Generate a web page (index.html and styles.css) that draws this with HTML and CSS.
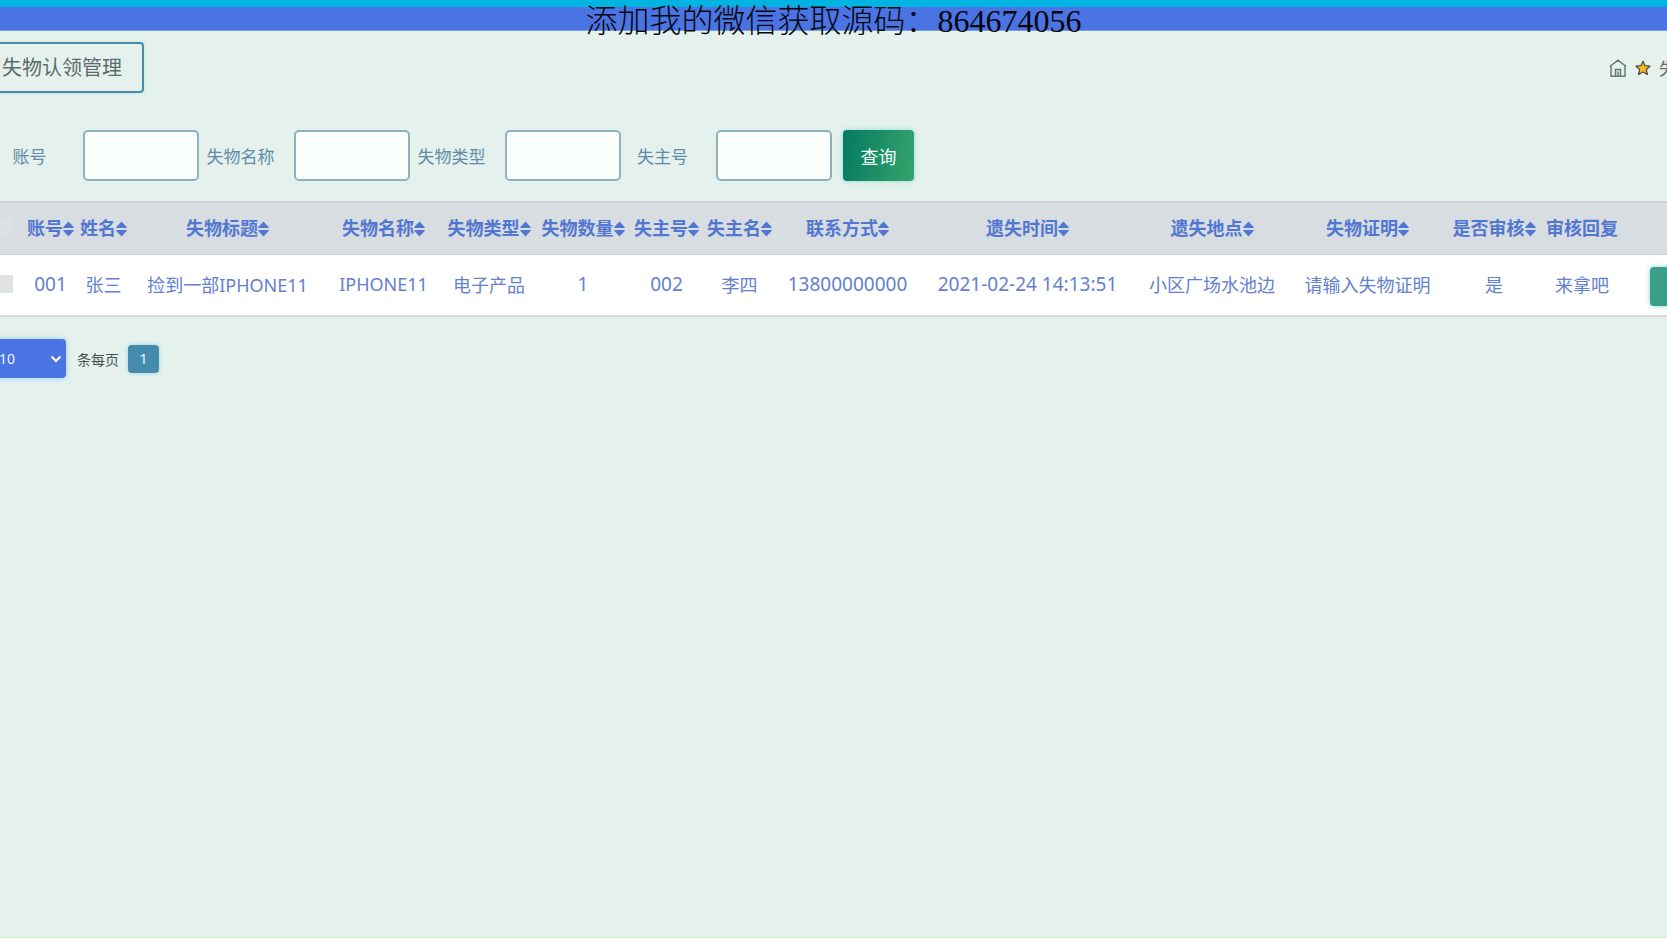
FILE: index.html
```
<!DOCTYPE html>
<html lang="zh-CN">
<head>
<meta charset="utf-8">
<title>失物认领管理</title>
<link rel="stylesheet" href="styles.css">
</head>
<body>
<svg class="defs" width="0" height="0" aria-hidden="true">
  <symbol id="sort" viewBox="0 0 11 16"><path d="M5.500 .5 10.600 6q.7 1-.4 1H.8Q-.3 7 .4 6Z M5.500 15.500 10.600 10q.7-1-.4-1H.8Q-.3 9 .4 10Z"/></symbol>
</svg>
<div class="notice">添加我的微信获取源码：864674056</div>
<header class="topbar"></header>
<main class="page">
  <div class="heading">
    <h1 class="title">失物认领管理</h1>
    <nav class="crumbs" aria-label="位置">
      <a href="#" aria-label="首页"><svg class="home" viewBox="0 0 18 18"><path d="M.8 7.500 9 1.200l8.200 6.300M2 7v10.200h14V7M6.500 17v-6.500h5V17M9 12.500V17"/></svg></a>
      <svg class="star" viewBox="0 0 16 16"><path d="m8 1.200 2 4.500 5 .5-3.700 3.300 1.100 5L8 12l-4.400 2.500 1.100-5L1 6.200l5-.5Z"/></svg>
      <span>失</span>
    </nav>
  </div>
  <form class="search">
    <label for="account">账号</label><input id="account" type="text">
    <label for="item">失物名称</label><input id="item" type="text">
    <label for="kind">失物类型</label><input id="kind" type="text">
    <label for="owner">失主号</label><input id="owner" type="text">
    <button type="button" class="query">查询</button>
  </form>
  <table class="grid">
    <colgroup>
      <col class="c-check"><col class="c-id"><col class="c-id"><col class="c-title"><col class="c-name"><col class="c-kind"><col class="c-kind"><col class="c-owner"><col class="c-owner"><col class="c-phone"><col class="c-time"><col class="c-place"><col class="c-proof"><col class="c-kind"><col class="c-reply"><col>
    </colgroup>
    <thead>
      <tr>
        <th><input type="checkbox" class="tick tick-all" aria-label="全选"></th>
        <th>账号<svg class="sort"><use href="#sort"/></svg></th>
        <th>姓名<svg class="sort"><use href="#sort"/></svg></th>
        <th>失物标题<svg class="sort"><use href="#sort"/></svg></th>
        <th>失物名称<svg class="sort"><use href="#sort"/></svg></th>
        <th>失物类型<svg class="sort"><use href="#sort"/></svg></th>
        <th>失物数量<svg class="sort"><use href="#sort"/></svg></th>
        <th>失主号<svg class="sort"><use href="#sort"/></svg></th>
        <th>失主名<svg class="sort"><use href="#sort"/></svg></th>
        <th>联系方式<svg class="sort"><use href="#sort"/></svg></th>
        <th>遗失时间<svg class="sort"><use href="#sort"/></svg></th>
        <th>遗失地点<svg class="sort"><use href="#sort"/></svg></th>
        <th>失物证明<svg class="sort"><use href="#sort"/></svg></th>
        <th>是否审核<svg class="sort"><use href="#sort"/></svg></th>
        <th>审核回复</th>
        <th></th>
      </tr>
    </thead>
    <tbody>
      <tr>
        <td><input type="checkbox" class="tick" aria-label="选择"></td>
        <td class="num">001</td>
        <td>张三</td>
        <td>捡到一部IPHONE11</td>
        <td>IPHONE11</td>
        <td>电子产品</td>
        <td class="num">1</td>
        <td class="num">002</td>
        <td>李四</td>
        <td class="num">13800000000</td>
        <td class="num">2021-02-24 14:13:51</td>
        <td>小区广场水池边</td>
        <td>请输入失物证明</td>
        <td>是</td>
        <td>来拿吧</td>
        <td class="ops"><button type="button" class="action" aria-label="操作"></button></td>
      </tr>
    </tbody>
  </table>
  <div class="pager">
    <div class="size">
      <select id="size"><option>10</option></select>
      <svg class="chevron" viewBox="0 0 12 8"><path d="m1.500 1.500 4.500 4.500 4.500-4.500"/></svg>
    </div>
    <label for="size">条每页</label>
    <button type="button" class="current">1</button>
  </div>
</main>
</body>
</html>
```
FILE: styles.css
```
* { box-sizing: border-box; }
body {
  margin: 0;
  min-height: 100vh;
  overflow: hidden;
  position: relative;
  background: #e4f1ec;
  border-bottom: 1px solid #b8f4c0;
  font-family: "Noto Sans", "Noto Sans CJK SC", sans-serif;
  color: #5c6b6b;
}
button, input, select { font-family: inherit; margin: 0; }
.defs { position: absolute; }
.notice {
  position: absolute;
  top: 0;
  left: 0;
  right: 0;
  text-align: center;
  font: 300 32px/42px "Liberation Serif", "Noto Sans CJK SC", serif;
  color: #05070d;
}
.topbar {
  height: 31px;
  background: #4a74e3;
  border-top: 7px solid #00b4e1;
  border-bottom: 1px solid #7e9be0;
}
.heading {
  display: flex;
  justify-content: space-between;
  align-items: center;
  padding-top: 11px;
}
.title {
  margin: 0 0 0 -20px;
  padding: 0 20px;
  border: 2px solid #4a8ba6;
  border-radius: 4px;
  font-size: 20px;
  font-weight: 400;
  line-height: 47px;
  box-shadow: 0 0 3px #b9e2ec;
}
.crumbs {
  display: flex;
  align-items: center;
  gap: 8px;
  margin-right: -9px;
  font-size: 17px;
}
.crumbs a { display: flex; }
.home { width: 18px; height: 18px; fill: none; stroke: #68787a; stroke-width: 1.5; }
.star { width: 16px; height: 16px; fill: #f7b92c; stroke: #4f4a38; stroke-width: 1.2; stroke-linejoin: round; }
.search {
  display: flex;
  align-items: center;
  margin: 37px 0 20px -12px;
}
.search label {
  width: 83px;
  margin-right: 12px;
  text-align: center;
  white-space: nowrap;
  font-size: 17px;
  color: #628ca8;
}
.search input {
  width: 116px;
  height: 51px;
  border: 2px solid #8fb0bd;
  border-radius: 5px;
  background: #fbfffc;
}
.query {
  width: 71px;
  height: 51px;
  margin-left: 11px;
  padding: 0;
  border: 0;
  border-radius: 4px;
  background: linear-gradient(100deg, #047a60, #35a46c);
  box-shadow: 0 0 5px #8fd8dc;
  color: #f2fff8;
  font-size: 18px;
}
.grid {
  width: 100%;
  table-layout: fixed;
  border-collapse: collapse;
  font-size: 18px;
  color: #6480cf;
}
.c-check { width: 24px; }
.c-id { width: 53px; }
.c-title { width: 195px; }
.c-name { width: 117px; }
.c-kind { width: 94px; }
.c-owner { width: 73px; }
.c-phone { width: 143px; }
.c-time { width: 217px; }
.c-place { width: 152px; }
.c-proof { width: 159px; }
.c-reply { width: 82px; }
.grid th, .grid td { padding: 0; text-align: center; white-space: nowrap; }
.grid th {
  height: 52px;
  padding-bottom: 2px;
  background: #d7dde0;
  border-top: 2px solid #cbd3d3;
  border-bottom: 1px solid #cbd3d3;
  color: #5277d2;
}
.grid td {
  height: 62px;
  padding-bottom: 1px;
  background: #fefffe;
  border-bottom: 2px solid #d6dddb;
}
.grid .num { font-size: 19px; }
.sort { width: 11px; height: 16px; vertical-align: -2px; fill: currentColor; }
.grid .tick {
  appearance: none;
  display: block;
  width: 18px;
  height: 18px;
  margin-left: -5px;
  background: #dfe4e3;
}
.grid .tick-all { background: #dbe1e3; }
.grid .ops { padding: 3px 0 0 27px; }
.action {
  display: block;
  width: 60px;
  height: 39px;
  border: 0;
  border-radius: 4px;
  background: #3a9e88;
  box-shadow: 0 0 5px #7fd8d4;
}
.pager {
  display: flex;
  align-items: center;
  padding-top: 22px;
  font-size: 14px;
  color: #48504c;
}
.size {
  display: grid;
  align-items: center;
  margin-left: -12px;
}
.size select, .chevron { grid-area: 1 / 1; }
.size select {
  appearance: none;
  width: 78px;
  height: 39px;
  padding: 0 0 0 11px;
  border: 0;
  border-radius: 4px;
  background: #4a74e3;
  box-shadow: 0 0 5px #9fc8f4;
  color: #eef6ff;
  font-size: 14px;
}
.chevron {
  justify-self: end;
  width: 12px;
  height: 8px;
  margin-right: 4px;
  fill: none;
  stroke: #fff;
  stroke-width: 2;
  pointer-events: none;
}
.pager label { margin: 0 9px 0 11px; }
.current {
  width: 31px;
  height: 28px;
  padding: 0;
  border: 0;
  border-radius: 4px;
  background: #458bae;
  box-shadow: 0 0 4px #9bd2ea;
  color: #f0faff;
  font-size: 14px;
}
```
